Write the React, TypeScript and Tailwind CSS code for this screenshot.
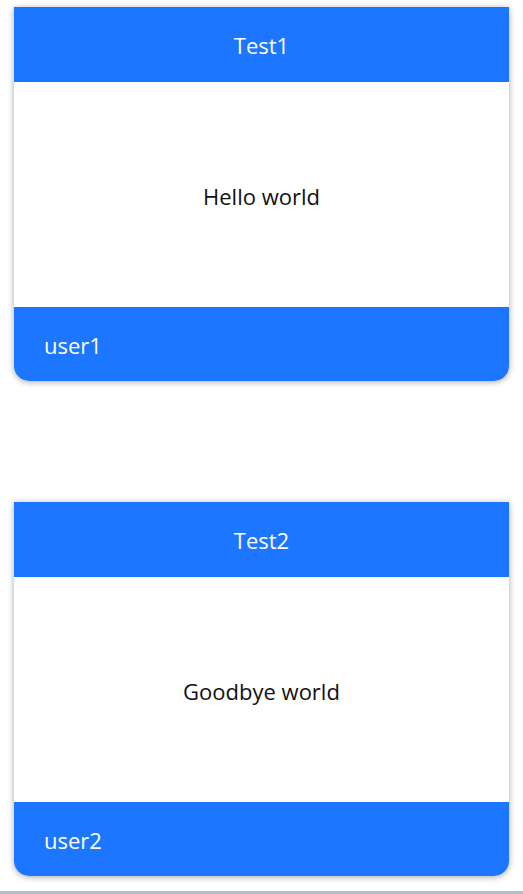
import React from 'react';

const posts = [
  { title: 'Test1', body: 'Hello world', user: 'user1' },
  { title: 'Test2', body: 'Goodbye world', user: 'user2' },
];

const Card = ({ title, body, user }: { title: string; body: string; user: string }) => {
  return (
    <div className="w-full rounded-b-[15px] shadow-[0_1px_6px_rgba(0,0,0,0.35)] overflow-hidden">
      <div className="h-[75px] bg-[#1c76ff] flex items-center justify-center pt-[2px] text-white text-[22px]">
        {title}
      </div>
      <div className="h-[225px] bg-white flex items-center justify-center pt-[3px] text-[#111] text-[22px]">
        {body}
      </div>
      <div className="h-[74px] bg-[#1c76ff] flex items-center pl-[30px] pt-[3px] text-white text-[22px]">
        {user}
      </div>
    </div>
  );
};

export default function App() {
  return (
    <div className="h-[894px] bg-white flex flex-col" style={{ fontFamily: '"Open Sans", "Noto Sans", sans-serif' }}>
      <div className="flex-1 flex flex-col gap-[121px] px-[14px] pt-[7px]">
        {posts.map((p) => (
          <Card key={p.title} {...p} />
        ))}
      </div>
      <div className="h-[3px] bg-[#b7bec6]"></div>
    </div>
  );
}
